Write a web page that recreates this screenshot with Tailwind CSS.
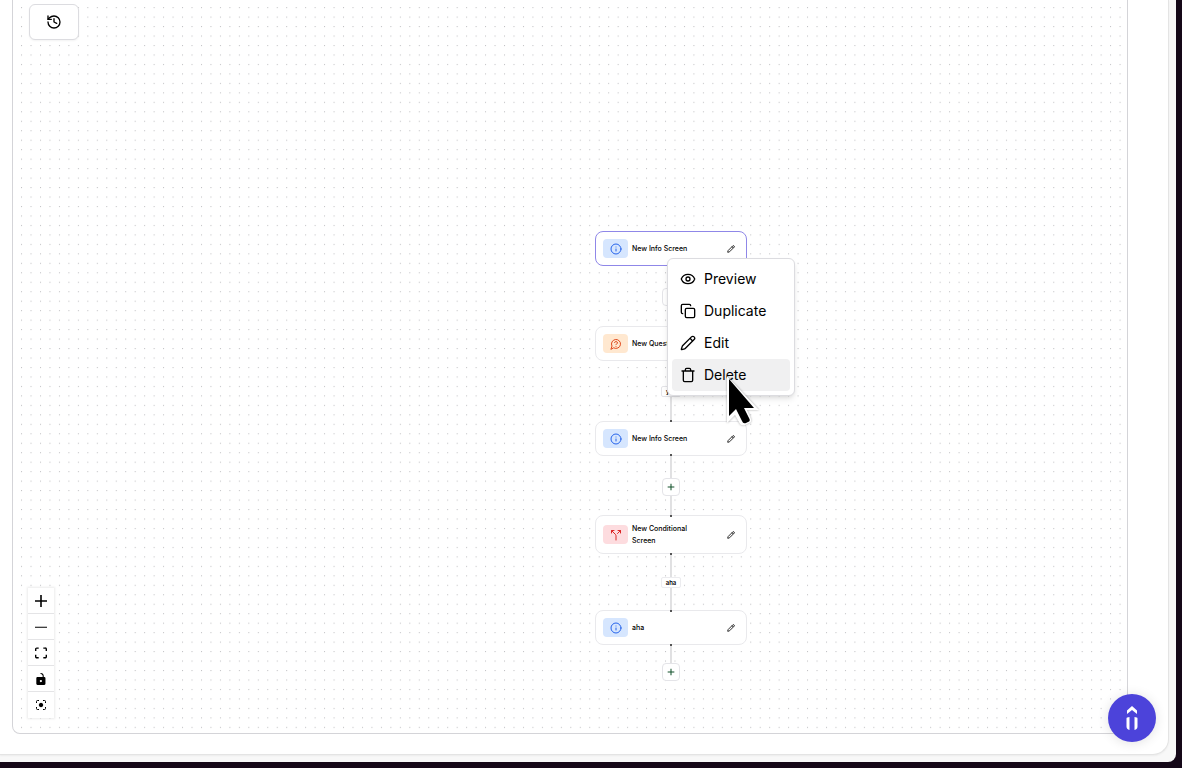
<!DOCTYPE html>
<html lang="en">
<head>
    <meta charset="UTF-8">
    <meta name="viewport" content="width=device-width, initial-scale=1.0">
    <title>Flow Editor</title>
    <script src="https://cdn.jsdelivr.net/npm/@tailwindcss/browser@4"></script>
</head>
<body class="h-screen overflow-hidden bg-[#150818] font-['Inter',sans-serif] text-black">

    <!-- shared icons -->
    <svg class="hidden">
        <symbol id="info" viewBox="0 0 24 24"><circle cx="12" cy="12" r="10"/><path d="M12 16v-4M12 8h.01"/></symbol>
        <symbol id="pencil" viewBox="0 0 24 24"><path d="M21.174 6.812a1 1 0 0 0-3.986-3.987L3.842 16.174a2 2 0 0 0-.5.83l-1.321 4.352a.5.5 0 0 0 .623.622l4.353-1.32a2 2 0 0 0 .83-.497z"/><path d="m15 5 4 4"/></symbol>
        <symbol id="plus" viewBox="0 0 24 24"><path d="M4 12h16M12 4v16"/></symbol>
    </svg>

    <div class="h-full pr-1.5 pb-1.5">
        <div class="h-full rounded-br-lg bg-[#f8f8f8] pr-[7px] pb-[7px]">
            <div class="h-full rounded-br-2xl border-r border-b border-[#e4e4e4] bg-white pr-10 pb-5 pl-3 shadow-xs">
                <main class="relative h-full overflow-hidden rounded-b-lg border-x border-b border-[#d4d4d8]">
                    <svg class="absolute inset-0 size-full">
                        <pattern id="dots" x="17" y="15" width="20" height="20" patternUnits="userSpaceOnUse" patternTransform="scale(0.4735)">
                            <circle cx="1.2" cy="1.2" r="1.1" fill="#acacb0"/>
                        </pattern>
                        <rect width="100%" height="100%" fill="url(#dots)"/>
                    </svg>

                    <button aria-label="History" class="absolute top-1 left-4 flex h-9 w-[50px] items-center justify-center rounded-md border border-[#dcdce0] bg-white shadow-xs">
                        <svg class="size-4" viewBox="0 0 24 24" fill="none" stroke="currentColor" stroke-width="2" stroke-linecap="round" stroke-linejoin="round"><path d="M3 12a9 9 0 1 0 9-9 9.75 9.75 0 0 0-6.74 2.74L3 8"/><path d="M3 3v5h5"/><path d="M12 7v5l4 2"/></svg>
                    </button>

                    <!-- edges -->
                    <svg class="absolute top-0 left-[582px] h-full w-[152px]" stroke="#d4d4d6" stroke-width="1.4" fill="none">
                        <path d="M76 266v60M76 361v60M76 456v60M76 554v57M76 645v20"/>
                    </svg>

                    <!-- nodes -->
                    <div class="absolute top-[231px] left-[582px] flex h-[35px] w-[152px] items-center rounded-lg border border-[#8f87e8] bg-white px-[7px]">
                        <span class="flex h-[19px] w-[25px] items-center justify-center rounded-sm bg-[#d6e6fe] text-[#2563eb]"><svg class="size-3" fill="none" stroke="currentColor" stroke-width="2" stroke-linecap="round"><use href="#info"/></svg></span>
                        <span class="ml-1 flex-1 text-[7px] leading-3 font-medium">New Info Screen</span>
                        <button aria-label="Edit New Info Screen" class="mr-1"><svg class="size-2" fill="none" stroke="currentColor" stroke-width="2.5" stroke-linejoin="round"><use href="#pencil"/></svg></button>
                    </div>
                    <button aria-label="Add screen" class="absolute top-[288px] left-[649px] size-[18px] rounded-sm border border-[#e4e4e8] bg-white"></button>

                    <div class="absolute top-[326px] left-[582px] flex h-[35px] w-[152px] items-center rounded-lg border border-[#e9e9ec] bg-white px-[7px]">
                        <span class="flex h-[19px] w-[25px] items-center justify-center rounded-sm bg-[#ffe8d0] text-[#e0481c]"><svg class="size-3" viewBox="0 0 24 24" fill="none" stroke="currentColor" stroke-width="2" stroke-linecap="round" stroke-linejoin="round"><path d="M7.9 20A9 9 0 1 0 4 16.1L2 22Z"/><path d="M9.09 9a3 3 0 0 1 5.83 1c0 2-3 3-3 3M12 17h.01"/></svg></span>
                        <span class="ml-1 flex-1 text-[7px] leading-3 font-medium">New Question</span>
                    </div>
                    <span class="absolute top-[386px] left-[648px] flex h-[11px] w-5 items-center rounded-xs border border-[#e4e4e8] bg-white pl-1 text-[6px] font-semibold">yes</span>

                    <div class="absolute top-[421px] left-[582px] flex h-[35px] w-[152px] items-center rounded-lg border border-[#e9e9ec] bg-white px-[7px]">
                        <span class="flex h-[19px] w-[25px] items-center justify-center rounded-sm bg-[#d6e6fe] text-[#2563eb]"><svg class="size-3" fill="none" stroke="currentColor" stroke-width="2" stroke-linecap="round"><use href="#info"/></svg></span>
                        <span class="ml-1 flex-1 text-[7px] leading-3 font-medium">New Info Screen</span>
                        <button aria-label="Edit New Info Screen" class="mr-1"><svg class="size-2" fill="none" stroke="currentColor" stroke-width="2.5" stroke-linejoin="round"><use href="#pencil"/></svg></button>
                    </div>
                    <button aria-label="Add screen" class="absolute top-[478px] left-[649px] flex size-[18px] items-center justify-center rounded-sm border border-[#e4e4e8] bg-white text-[#14532d]"><svg class="size-2.5" fill="none" stroke="currentColor" stroke-width="2.5"><use href="#plus"/></svg></button>

                    <div class="absolute top-[515px] left-[582px] flex h-[39px] w-[152px] items-center rounded-lg border border-[#e9e9ec] bg-white px-[7px]">
                        <span class="flex h-[19px] w-[25px] items-center justify-center rounded-sm bg-[#fddcdf] text-[#dc2626]"><svg class="size-3" viewBox="0 0 24 24" fill="none" stroke="currentColor" stroke-width="2" stroke-linecap="round" stroke-linejoin="round"><path d="M16 3h5v5M8 3H3v5M12 22v-8.3a4 4 0 0 0-1.172-2.872L3 3M15 9l6-6"/></svg></span>
                        <span class="ml-1 flex-1 pr-7 text-[7px] leading-3 font-medium">New Conditional Screen</span>
                        <button aria-label="Edit New Conditional Screen" class="mr-1"><svg class="size-2" fill="none" stroke="currentColor" stroke-width="2.5" stroke-linejoin="round"><use href="#pencil"/></svg></button>
                    </div>
                    <span class="absolute top-[577px] left-[648px] flex h-[11px] w-5 items-center justify-center rounded-xs border border-[#ececef] bg-white text-[6px] font-semibold">aha</span>

                    <div class="absolute top-[610px] left-[582px] flex h-[35px] w-[152px] items-center rounded-lg border border-[#e9e9ec] bg-white px-[7px]">
                        <span class="flex h-[19px] w-[25px] items-center justify-center rounded-sm bg-[#d6e6fe] text-[#2563eb]"><svg class="size-3" fill="none" stroke="currentColor" stroke-width="2" stroke-linecap="round"><use href="#info"/></svg></span>
                        <span class="ml-1 flex-1 text-[7px] leading-3 font-medium">aha</span>
                        <button aria-label="Edit aha" class="mr-1"><svg class="size-2" fill="none" stroke="currentColor" stroke-width="2.5" stroke-linejoin="round"><use href="#pencil"/></svg></button>
                    </div>
                    <button aria-label="Add screen" class="absolute top-[663px] left-[649px] flex size-[18px] items-center justify-center rounded-sm border border-[#e4e4e8] bg-white text-[#14532d]"><svg class="size-2.5" fill="none" stroke="currentColor" stroke-width="2.5"><use href="#plus"/></svg></button>

                    <!-- connection handles -->
                    <svg class="absolute top-0 left-[582px] h-full w-[152px]" fill="#555">
                        <path d="M75 420h2v2h-2zM75 454h2v2h-2zM75 515h2v2h-2zM75 553h2v2h-2zM75 610h2v2h-2zM75 644h2v2h-2z"/>
                    </svg>

                    <!-- zoom controls -->
                    <div class="absolute bottom-[15px] left-[15px] flex w-[26px] flex-col divide-y divide-[#e4e4e6] bg-white shadow-[0_0_2px_1px_rgba(0,0,0,0.08)]">
                        <button aria-label="Zoom in" class="flex h-[26px] items-center justify-center"><svg class="size-3" viewBox="0 0 32 32"><path d="M32 18.133H18.133V32h-4.266V18.133H0v-4.266h13.867V0h4.266v13.867H32z"/></svg></button>
                        <button aria-label="Zoom out" class="flex h-[26px] items-center justify-center"><svg class="h-3 w-3" viewBox="0 0 32 32"><path d="M0 15h32v3H0z"/></svg></button>
                        <button aria-label="Fit view" class="flex h-[26px] items-center justify-center"><svg class="h-3 w-3" viewBox="0 0 32 30"><path d="M3.692 4.63c0-.53.4-.938.939-.938h5.215V0H4.708C2.13 0 0 2.054 0 4.63v5.216h3.692V4.631zM27.354 0h-5.2v3.692h5.17c.53 0 .984.4.984.939v5.215H32V4.631A4.624 4.624 0 0 0 27.354 0zm.954 24.83c0 .532-.4.94-.939.94h-5.215v3.768h5.215c2.577 0 4.631-2.13 4.631-4.707v-5.139h-3.692v5.139zm-23.677.94a.919.919 0 0 1-.939-.94v-5.138H0v5.139c0 2.577 2.13 4.707 4.708 4.707h5.138V25.77H4.631z"/></svg></button>
                        <button aria-label="Lock" class="flex h-[26px] items-center justify-center"><svg class="h-3 w-3" viewBox="0 0 25 32"><path d="M21.333 10.667H19.81V7.619C19.81 3.429 16.38 0 12.19 0c-4.114 1.828-1.37 2.133.305 2.438 1.676.305 4.42 2.59 4.42 5.181v3.048H3.047A3.056 3.056 0 0 0 0 13.714v15.238A3.056 3.056 0 0 0 3.048 32h18.285a3.056 3.056 0 0 0 3.048-3.048V13.714a3.056 3.056 0 0 0-3.048-3.047zM12.19 24.533a3.056 3.056 0 0 1-3.047-3.047 3.056 3.056 0 0 1 3.047-3.048 3.056 3.056 0 0 1 3.048 3.048 3.056 3.056 0 0 1-3.048 3.047z"/></svg></button>
                        <button aria-label="Center" class="flex h-[26px] items-center justify-center"><svg class="size-3" viewBox="0 0 24 24" fill="none" stroke="currentColor" stroke-width="2"><circle cx="12" cy="12" r="3.5" fill="currentColor"/><path d="M3 8V5a2 2 0 0 1 2-2h3M16 3h3a2 2 0 0 1 2 2v3M21 16v3a2 2 0 0 1-2 2h-3M8 21H5a2 2 0 0 1-2-2v-3"/></svg></button>
                    </div>

                    <!-- context menu -->
                    <div role="menu" class="absolute top-[258px] left-[654px] flex w-32 flex-col rounded-md border border-[#dcdce0] bg-white p-1 text-sm shadow-md">
                        <button role="menuitem" class="flex h-8 items-center gap-2 rounded-sm px-2"><svg class="size-4" viewBox="0 0 24 24" fill="none" stroke="currentColor" stroke-width="2" stroke-linecap="round" stroke-linejoin="round"><path d="M2.062 12.348a1 1 0 0 1 0-.696 10.75 10.75 0 0 1 19.876 0 1 1 0 0 1 0 .696 10.75 10.75 0 0 1-19.876 0"/><circle cx="12" cy="12" r="3"/></svg>Preview</button>
                        <button role="menuitem" class="flex h-8 items-center gap-2 rounded-sm px-2"><svg class="size-4" viewBox="0 0 24 24" fill="none" stroke="currentColor" stroke-width="2" stroke-linecap="round" stroke-linejoin="round"><rect width="14" height="14" x="8" y="8" rx="2"/><path d="M4 16c-1.1 0-2-.9-2-2V4c0-1.1.9-2 2-2h10c1.1 0 2 .9 2 2"/></svg>Duplicate</button>
                        <button role="menuitem" class="flex h-8 items-center gap-2 rounded-sm px-2"><svg class="size-4" fill="none" stroke="currentColor" stroke-width="2" stroke-linejoin="round"><use href="#pencil"/></svg>Edit</button>
                        <button role="menuitem" class="flex h-8 items-center gap-2 rounded-sm bg-[#f0f0f1] px-2"><svg class="size-4" viewBox="0 0 24 24" fill="none" stroke="currentColor" stroke-width="2" stroke-linecap="round" stroke-linejoin="round"><path d="M3 6h18M19 6v14a2 2 0 0 1-2 2H7a2 2 0 0 1-2-2V6M8 6V4a2 2 0 0 1 2-2h4a2 2 0 0 1 2 2v2"/></svg>Delete</button>
                    </div>

                    <!-- pointer -->
                    <svg class="absolute top-[374px] left-[711px] h-[56px] w-[40px] drop-shadow-[0_0_1px_rgba(0,0,0,0.35)]" viewBox="0 0 40 56">
                        <path d="M3 2v47l8-8 5 9q2 2 5 1l4-2q3-1 2-4l-4-9h12z" fill="#fff"/>
                        <path d="M5 5v37l7-7 6 12q1 3 4 2l2-1q3-1 1-4l-5-10h10z" fill="#000"/>
                    </svg>
                </main>
            </div>
        </div>
    </div>

    <button aria-label="Open assistant" class="fixed right-[26px] bottom-[26px] flex size-12 items-center justify-center rounded-full bg-[#4c43da] shadow-[0_1px_12px_rgba(0,0,0,0.12)]">
        <svg class="size-6" viewBox="0 0 24 24" fill="#fff"><path d="M12 0l5 4.500v3.500l-5-4-5 4V4.500zM6.500 12.500q0-1.500 3-1.500v13q-3-1-3-3.500zM17.500 12.500q0-1.500-3-1.500v13q3-1 3-3.500z"/></svg>
    </button>

</body>
</html>
